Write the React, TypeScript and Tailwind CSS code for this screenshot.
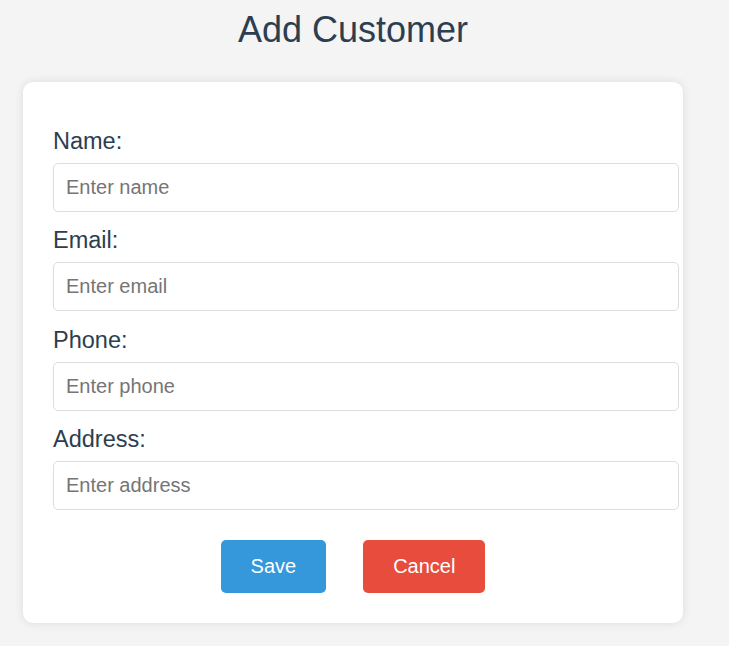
import React, { useState } from "react";

interface Field {
  key: string;
  label: string;
  placeholder: string;
  type: string;
}

const fields: Field[] = [
  { key: "name", label: "Name:", placeholder: "Enter name", type: "text" },
  { key: "email", label: "Email:", placeholder: "Enter email", type: "email" },
  { key: "phone", label: "Phone:", placeholder: "Enter phone", type: "text" },
  { key: "address", label: "Address:", placeholder: "Enter address", type: "text" },
];

export default function App() {
  const [values, setValues] = useState<Record<string, string>>({});

  const onSave = (e: React.FormEvent) => {
    e.preventDefault();
  };

  return (
    <div
      className="min-h-screen bg-[#f4f4f4] text-[#2c3e50]"
      style={{ fontFamily: '"Liberation Sans", Arial, sans-serif' }}
    >
      <div className="w-[706px] px-[23px] pt-[9px]">
        <h1 className="text-center text-[36px] leading-[41px] font-normal mb-[32px]">
          Add Customer
        </h1>

        <form
          onSubmit={onSave}
          className="w-[660px] bg-white rounded-[10px] shadow-[0_0_10px_rgba(0,0,0,0.1)] px-[30px] pt-[46px] pb-[30px]"
        >
          {fields.map((f) => (
            <div key={f.key} className="mb-[15.4px]">
              <label className="block text-[23.5px] leading-[26px] mb-[9px]">
                {f.label}
              </label>
              <input
                type={f.type}
                placeholder={f.placeholder}
                value={values[f.key] || ""}
                onChange={(e) =>
                  setValues({ ...values, [f.key]: e.target.value })
                }
                className="block w-[626px] h-[49px] px-[12px] border border-[#dddddd] rounded-[5px] text-[20px] text-[#2c3e50] placeholder:text-[#757575] outline-none"
              />
            </div>
          ))}

          <div className="flex justify-center gap-[37px] mt-[30px]">
            <button
              type="submit"
              className="bg-[#3498db] text-white text-[20px] leading-[23px] px-[30px] py-[15px] rounded-[5px]"
            >
              Save
            </button>
            <button
              type="button"
              className="bg-[#e74c3c] text-white text-[20px] leading-[23px] px-[30px] py-[15px] rounded-[5px]"
            >
              Cancel
            </button>
          </div>
        </form>
      </div>
    </div>
  );
}
